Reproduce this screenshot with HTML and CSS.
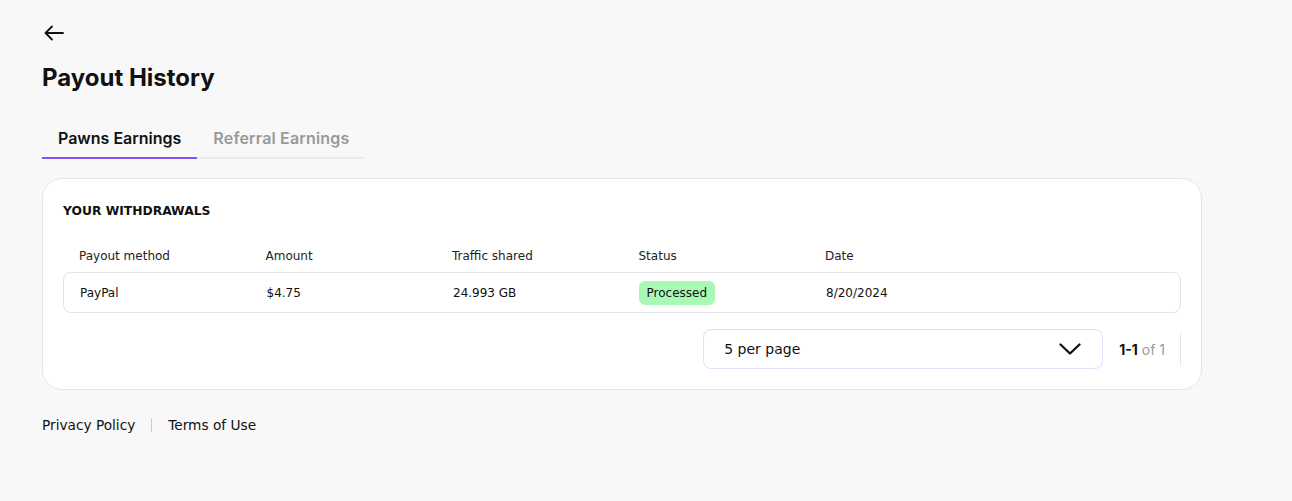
FILE: index.html
```html
<!DOCTYPE html>
<html>
<head>
<meta charset="utf-8">
<link rel="stylesheet" href="styles.css">
</head>
<body>
<div class="page">
  <button class="back" aria-label="Back">
    <svg width="20" height="16" viewBox="0 0 20 16" fill="none" stroke="#111" stroke-width="1.8" stroke-linecap="round" stroke-linejoin="round"><path d="M19 8H2M8 1.5L1.5 8L8 14.5"/></svg>
  </button>
  <h1 class="title">Payout History</h1>
  <div class="tabs">
    <div class="tab active">Pawns Earnings</div>
    <div class="tab">Referral Earnings</div>
  </div>
  <div class="card">
    <div class="card-title">YOUR WITHDRAWALS</div>
    <div class="thead">
      <div>Payout method</div><div>Amount</div><div>Traffic shared</div><div>Status</div><div>Date</div><div></div>
    </div>
    <div class="trow">
      <div>PayPal</div><div>$4.75</div><div>24.993 GB</div><div><span class="badge">Processed</span></div><div>8/20/2024</div><div></div>
    </div>
    <div class="pager">
      <div class="select">
        <span>5 per page</span>
        <svg width="22" height="12" viewBox="0 0 22 12" fill="none" stroke="#111" stroke-width="2.3" stroke-linecap="round" stroke-linejoin="round"><path d="M1.5 1.5l9.5 9 9.5-9"/></svg>
      </div>
      <div class="range"><b>1-1</b> <span>of 1</span></div>
      <div class="vline"></div>
    </div>
  </div>
  <div class="footer">
    <a>Privacy Policy</a><span class="sep"></span><a>Terms of Use</a>
  </div>
</div>
</body>
</html>
```
FILE: styles.css
```css
html, body { margin: 0; padding: 0; }
body { background: #f8f8f8; font-family: "DejaVu Sans", sans-serif; color: #111; }
.page { padding: 22px 42px 0 42px; width: 1160px; }
.back { display: block; background: none; border: 0; padding: 0; margin: 0 0 0 2px; height: 20px; cursor: pointer; }
.back svg { display: block; margin-top: 2px; }
.title { margin: 21px 0 0 0; font-family: Inter, sans-serif; font-size: 24px; font-weight: 700; line-height: 30px; }
.tabs { display: inline-flex; margin-top: 28px; border-bottom: 2px solid #ebebeb; }
.tab { padding: 0 16px; height: 36px; line-height: 35px; font-family: Inter, sans-serif; font-size: 16px; font-weight: 600; color: #999; margin-bottom: -2px; white-space: nowrap; letter-spacing: 0.18px; }
.tab.active { color: #111; border-bottom: 2px solid #8a4ff5; letter-spacing: 0; }
.card { margin-top: 19px; background: #fff; border: 1px solid #e4e4e4; border-radius: 20px; padding: 24px 20px 20px 20px; }
.card-title { font-size: 12.3px; font-weight: 700; line-height: 16px; }
.thead, .trow { display: grid; grid-template-columns: repeat(5, 186.5px) 1fr; padding: 0 16px; font-size: 12px; }
.thead { margin-top: 27px; height: 20px; line-height: 20px; color: #222; }
.trow { margin-top: 6px; height: 39px; align-items: center; border: 1px solid #e3e3e3; border-radius: 8px; }
.badge { display: inline-block; background: #a9f9b6; border-radius: 6px; padding: 0 8px; height: 24px; line-height: 24px; margin-left: -1px; }
.pager { display: flex; justify-content: flex-end; align-items: center; margin-top: 16px; }
.select { width: 400px; height: 40px; border: 1px solid #e2e0fa; border-radius: 8px; display: flex; align-items: center; justify-content: space-between; padding: 0 21px 0 20px; box-sizing: border-box; font-size: 14px; }
.select svg { display: block; }
.range { margin-left: 16px; font-family: Inter, sans-serif; font-size: 14px; white-space: nowrap; }
.range b { font-weight: 700; }
.range span { color: #999; }
.vline { width: 1px; height: 32px; background: #e3e3e3; margin-left: 15px; }
.footer { display: flex; align-items: center; margin-top: 27px; font-size: 13.7px; }
.footer a { color: #111; }
.sep { width: 1px; height: 14px; background: #ccc; margin: 0 16px; }
```
